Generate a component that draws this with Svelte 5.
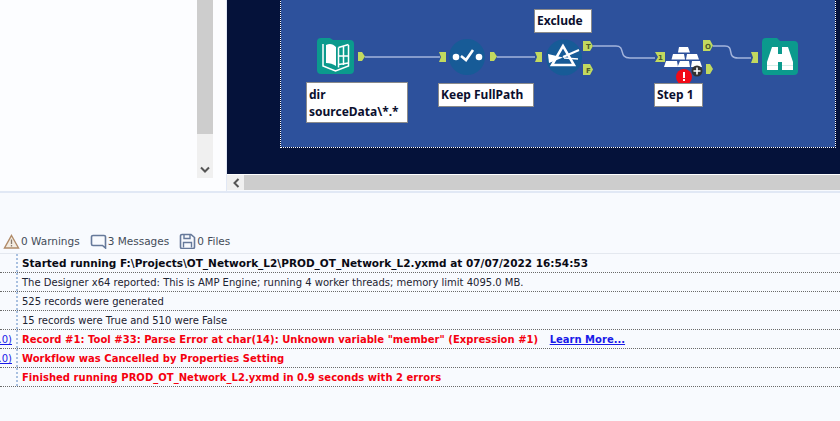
<script>
	const rows = [
		{ text: 'Started running F:\\Projects\\OT_Network_L2\\PROD_OT_Network_L2.yxmd at 07/07/2022 16:54:53', kind: 'head' },
		{ text: 'The Designer x64 reported: This is AMP Engine; running 4 worker threads; memory limit 4095.0 MB.', kind: '' },
		{ text: '525 records were generated', kind: '' },
		{ text: '15 records were True and 510 were False', kind: '' },
		{ text: 'Record #1: Tool #33: Parse Error at char(14): Unknown variable "member" (Expression #1)', kind: 'err', tool: '(33.0)', more: true },
		{ text: 'Workflow was Cancelled by Properties Setting', kind: 'err', tool: '(0.0)' },
		{ text: 'Finished running PROD_OT_Network_L2.yxmd in 0.9 seconds with 2 errors', kind: 'err' }
	]

	const anchors = [
		'M358 52h4l3 4.5-3 4.5h-4z',
		'M439 52h7v10h-7l2-5z',
		'M490 52h4l3 4.5-3 4.5h-4z',
		'M535 52h7v10h-7l2-5z',
		'M583 41h7l3 5-3 5h-7z',
		'M583 64h7l3 5.500-3 5.500h-7z',
		'M655 52h10v10h-10l3-5z',
		'M703 40h7l3 5.500-3 5.500h-7z',
		'M706 64h4l3 5-3 5h-4z',
		'M751 52h7v11h-7l2-5.500z'
	]
</script>

<div class="page">
	<div class="top">
		<div class="side">
			<div class="vscroll">
				<div class="vthumb"></div>
				<div class="vbtn">
					<svg width="10" height="8" viewBox="0 0 10 8"><path d="M1 1.500l4 4 4-4" fill="none" stroke="#555" stroke-width="2"/></svg>
				</div>
			</div>
		</div>
		<div class="main">
			<div class="canvas">
				<div class="sheet"></div>
				<svg class="flow" width="613" height="174" viewBox="227 0 613 174">
					<g fill="none" stroke="#a3b4dc" stroke-width="1.500">
						<path d="M365 57h75"/>
						<path d="M497 57h38"/>
						<path d="M593 46h23c10 0 2 12 14 12h25"/>
						<path d="M713 46h12c10 0 1 12 13 12h13"/>
					</g>

					<path d="M317 42a4 4 0 0 1 4-4h9l3 2h17a4 4 0 0 1 4 4v26a4 4 0 0 1-4 4h-29a4 4 0 0 1-4-4z" fill="#0b9a8d"/>
					<g fill="none" stroke="#fff" stroke-width="1.500">
						<path d="M323 44v22l12.500 5 13-5v-21"/>
						<path d="M338.500 47.500l10-3M338.500 47.500v20M338.500 56h10M338.500 64.500l10-1.500M343.500 46v19"/>
					</g>
					<path d="M326 45c4-2 7-1 10 2v19c-3-2-6-3-10-3z" fill="#fff"/>

					<circle cx="467" cy="57" r="18" fill="#175b97"/>
					<circle cx="456" cy="57" r="3.300" fill="#fff"/>
					<circle cx="479" cy="57" r="3.300" fill="#fff"/>
					<path d="M461 56l5 4 7-10" fill="none" stroke="#fff" stroke-width="2.600"/>

					<circle cx="564" cy="57.500" r="18" fill="#175b97"/>
					<path d="M563 46l-11 19h22z" fill="none" stroke="#fff" stroke-width="2.500"/>
					<path d="M548 54l15 3.500-14 5.500z" fill="#fff"/>
					<path d="M563 57l16-7" stroke="#fff" stroke-width="2"/>
					<path d="M564 58l14 1" stroke="#fff" stroke-width="1.500"/>

					<g fill="#fff">
						<path d="M679 47h9l2 5.500h-12z"/>
						<path d="M673 54h11l1 5.500h-13.500z"/>
						<path d="M687 54h10l2 5.500h-13z"/>
						<path d="M666 61h11l1 6h-14z"/>
						<path d="M680 61h9l1 6h-12.500z"/>
						<path d="M692 61h8l2 6h-11z"/>
					</g>

					<path d="M762 42a4 4 0 0 1 4-4h11l3 3h14a4 4 0 0 1 4 4v26a4 4 0 0 1-4 4h-28a4 4 0 0 1-4-4z" fill="#0b9a8d"/>
					<g fill="#fff">
						<path d="M772 47h6v23h-11v-8z"/>
						<path d="M782 47h6l5 15v8h-11z"/>
						<rect x="778" y="54" width="4" height="8"/>
					</g>
					<path d="M767 65.500h11M782 65.500h11" stroke="#d2efe9" stroke-width="1"/>

					<g fill="#c2d95f">
						{#each anchors as d}
							<path {d}/>
						{/each}
					</g>
					<g class="port">
						<text x="586" y="49">T</text>
						<text x="586" y="73">F</text>
						<text x="658" y="60">1</text>
						<text x="705" y="48.500">O</text>
					</g>

					<circle cx="684" cy="77" r="8" fill="#f20a17"/>
					<rect x="683" y="72" width="2" height="6" fill="#fff"/>
					<rect x="683" y="79" width="2" height="2" fill="#fff"/>
					<circle cx="697" cy="71" r="5.500" fill="#333"/>
					<path d="M693.500 71h7M697 67.500v7" stroke="#fff" stroke-width="1.600"/>
				</svg>
				<div class="note n-exclude">Exclude</div>
				<div class="note n-dir">dir<br />sourceData\*.*</div>
				<div class="note n-keep">Keep FullPath</div>
				<div class="note n-step">Step 1</div>
			</div>
			<div class="hscroll">
				<div class="hbtn">
					<svg width="8" height="10" viewBox="0 0 8 10"><path d="M6.500 1l-4 4 4 4" fill="none" stroke="#555" stroke-width="2"/></svg>
				</div>
				<div class="hthumb"></div>
			</div>
		</div>
	</div>

	<div class="results">
		<div class="tabs">
			<div class="tab">
				<svg width="17" height="15" viewBox="0 0 17 15"><path d="M8.500 1.500l7 12.500h-14z" fill="#f3ece2" stroke="#b08a68" stroke-width="1.400"/><path d="M8.500 5.500v4.500M8.500 11v1.500" stroke="#8a7a6c" stroke-width="1.300"/></svg>
				<span>0 Warnings</span>
			</div>
			<div class="tab">
				<svg width="17" height="15" viewBox="0 0 17 15"><path d="M3 1.500h11a1.500 1.500 0 0 1 1.500 1.500v11l-3-2.500h-9.500a1.500 1.500 0 0 1-1.500-1.500v-7a1.500 1.500 0 0 1 1.500-1.500z" fill="none" stroke="#66799a" stroke-width="1.600"/></svg>
				<span>3 Messages</span>
			</div>
			<div class="tab">
				<svg width="17" height="16" viewBox="0 0 17 16"><path d="M1.500 3a1.500 1.500 0 0 1 1.500-1.500h9l3.500 3v9.500a1.500 1.500 0 0 1-1.500 1.500h-11a1.500 1.500 0 0 1-1.500-1.500z" fill="none" stroke="#66799a" stroke-width="1.600"/><path d="M5 2v3.500h6v-3.500M4.500 14.500v-5h8v5" fill="none" stroke="#66799a" stroke-width="1.400"/></svg>
				<span>0 Files</span>
			</div>
		</div>
		<div class="log">
			{#each rows as row}
				<div class="row {row.kind}">
					<div class="tool">
						{#if row.tool}<span class="link">{row.tool}</span>{/if}
					</div>
					<div class="msg">
						{row.text}
						{#if row.more}<span class="link more">Learn More...</span>{/if}
					</div>
				</div>
			{/each}
		</div>
	</div>
</div>

<style>
	:global(body) {
		margin: 0;
		background: #f8fafe;
	}
	.page {
		width: 840px;
		height: 421px;
		overflow: hidden;
		display: flex;
		flex-direction: column;
		font-family: 'DejaVu Sans', sans-serif;
		font-size: 10px;
		color: #1c2230;
	}
	.top {
		display: flex;
		height: 193px;
		flex: none;
		border-bottom: 2px solid #e1e8f5;
		box-sizing: border-box;
	}
	.side {
		width: 227px;
		flex: none;
		padding-left: 197px;
		box-sizing: border-box;
		background: #fcfdff;
		border-right: 1px solid #e1e8f5;
	}
	.vscroll {
		width: 16px;
		height: 178px;
		background: #f0f0f0;
		display: flex;
		flex-direction: column;
	}
	.vthumb {
		height: 134px;
		background: #cdcdcd;
	}
	.vbtn {
		margin-top: auto;
		height: 17px;
		display: flex;
		align-items: center;
		justify-content: center;
	}
	.main {
		flex: 1;
		display: flex;
		flex-direction: column;
	}
	.canvas {
		position: relative;
		height: 174px;
		background: #05123a;
		border-bottom: 1px solid #fff;
		overflow: hidden;
	}
	.sheet {
		position: absolute;
		left: 54px;
		top: -4px;
		width: 554px;
		height: 151px;
		background: #2d519c;
		outline: 1px dotted #fff;
		box-shadow: 0 0 0 1px #05123a;
	}
	.flow {
		position: absolute;
		left: 0;
		top: 0;
	}
	.port text {
		font-size: 7px;
		font-weight: 700;
		fill: #4c5c2a;
	}
	.note {
		position: absolute;
		box-sizing: border-box;
		background: #fff;
		border: 1px solid #8a8a8a;
		font-size: 12px;
		font-weight: 700;
		line-height: 17px;
		color: #0b0f2e;
		padding: 2px;
		white-space: nowrap;
		font-family: 'Noto Sans', sans-serif;
	}
	.n-exclude {
		left: 307px;
		top: 9px;
		width: 58px;
		height: 24px;
	}
	.n-dir {
		left: 79px;
		top: 82px;
		width: 102px;
		height: 41px;
		padding-top: 3px;
	}
	.n-keep {
		left: 211px;
		top: 83px;
		width: 96px;
		height: 24px;
	}
	.n-step {
		left: 427px;
		top: 83px;
		width: 49px;
		height: 24px;
	}
	.hscroll {
		height: 15px;
		display: flex;
		background: #f0f0f0;
	}
	.hbtn {
		width: 17px;
		display: flex;
		align-items: center;
		justify-content: center;
	}
	.hthumb {
		flex: 1;
		background: #cdcdcd;
	}
	.results {
		flex: 1;
	}
	.tabs {
		height: 61px;
		box-sizing: border-box;
		padding: 40px 0 0 3px;
		display: flex;
		gap: 10px;
		font-size: 10.500px;
		border-bottom: 1px solid #e4e8ef;
	}
	.tab {
		display: flex;
		align-items: center;
		gap: 1px;
		height: 16px;
		color: #444c58;
	}
	.log {
		display: flex;
		flex-direction: column;
	}
	.row {
		height: 19px;
		box-sizing: border-box;
		display: flex;
		border-bottom: 1px dotted #6a6a6a;
		line-height: 19px;
		white-space: nowrap;
	}
	.tool {
		width: 18px;
		flex: none;
		box-sizing: border-box;
		padding-right: 4px;
		border-right: 2px dotted #a9c0e0;
		overflow: hidden;
		display: flex;
		justify-content: flex-end;
	}
	.msg {
		padding-left: 4px;
	}
	.head .msg {
		font-size: 10.500px;
		font-weight: 700;
		color: #0a0a14;
	}
	.err .msg {
		font-weight: 700;
		letter-spacing: 0.03px;
		color: #f5000f;
	}
	.link {
		color: #1a1ae8;
		text-decoration: underline;
		font-weight: 400;
		flex: none;
	}
	.more {
		margin-left: 8px;
		font-weight: 700;
		letter-spacing: 0;
	}
</style>
